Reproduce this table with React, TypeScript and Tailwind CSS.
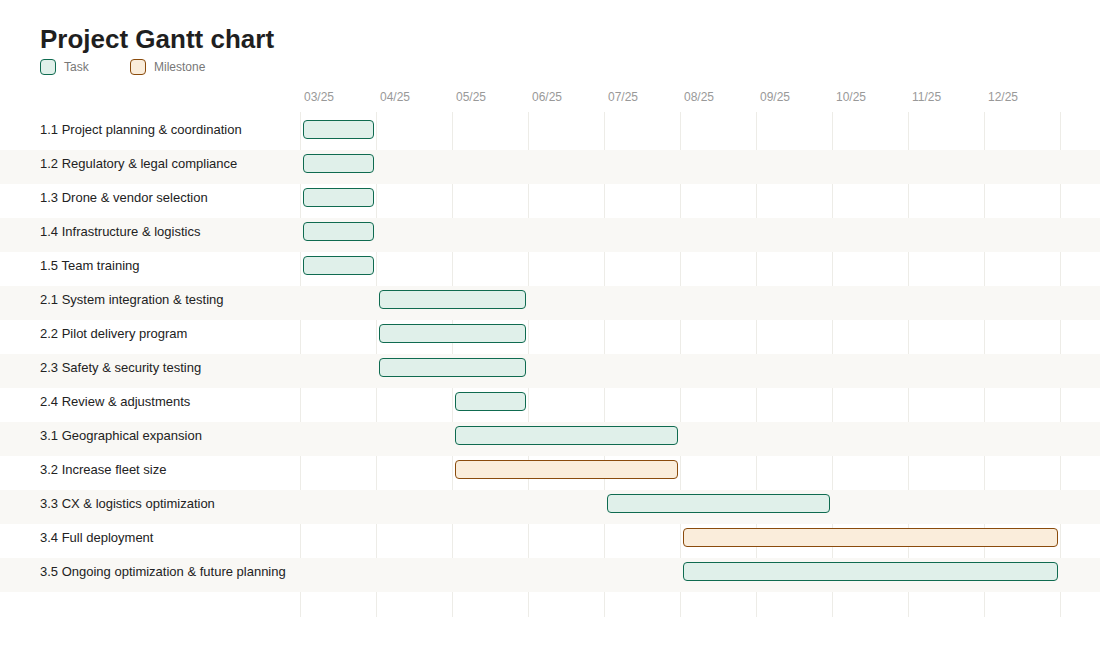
const months = ["03/25", "04/25", "05/25", "06/25", "07/25", "08/25", "09/25", "10/25", "11/25", "12/25"];

type Kind = "task" | "milestone";

const rows: Array<{ label: string; pos: string; kind: Kind }> = [
  { label: "1.1 Project planning & coordination", pos: "col-start-1 col-span-1", kind: "task" },
  { label: "1.2 Regulatory & legal compliance", pos: "col-start-1 col-span-1", kind: "task" },
  { label: "1.3 Drone & vendor selection", pos: "col-start-1 col-span-1", kind: "task" },
  { label: "1.4 Infrastructure & logistics", pos: "col-start-1 col-span-1", kind: "task" },
  { label: "1.5 Team training", pos: "col-start-1 col-span-1", kind: "task" },
  { label: "2.1 System integration & testing", pos: "col-start-2 col-span-2", kind: "task" },
  { label: "2.2 Pilot delivery program", pos: "col-start-2 col-span-2", kind: "task" },
  { label: "2.3 Safety & security testing", pos: "col-start-2 col-span-2", kind: "task" },
  { label: "2.4 Review & adjustments", pos: "col-start-3 col-span-1", kind: "task" },
  { label: "3.1 Geographical expansion", pos: "col-start-3 col-span-3", kind: "task" },
  { label: "3.2 Increase fleet size", pos: "col-start-3 col-span-3", kind: "milestone" },
  { label: "3.3 CX & logistics optimization", pos: "col-start-5 col-span-3", kind: "task" },
  { label: "3.4 Full deployment", pos: "col-start-6 col-span-5", kind: "milestone" },
  { label: "3.5 Ongoing optimization & future planning", pos: "col-start-6 col-span-5", kind: "task" },
];

const barStyle: Record<Kind, string> = {
  task: "border-[#0f6b50] bg-[#e0f0ea]",
  milestone: "border-[#8a4b0c] bg-[#faeddb]",
};

export default function App() {
  return (
    <div className="min-h-[646px] w-full bg-white font-['Liberation_Sans',Arial,sans-serif] text-[#222]">
      <div className="px-10 pt-[24px]">
        <h1 className="text-[26px] font-bold leading-[30px] text-[#1f1f1f]">Project Gantt chart</h1>
        <div className="mt-[4px] flex items-center text-[12px] text-[#777]">
          <div className="flex w-[90px] items-center gap-[8px]">
            <span className="h-[16px] w-[16px] rounded-[4px] border border-[#0f6b50] bg-[#e0f0ea]" />
            <span>Task</span>
          </div>
          <div className="flex items-center gap-[8px]">
            <span className="h-[16px] w-[16px] rounded-[4px] border border-[#8a4b0c] bg-[#faeddb]" />
            <span>Milestone</span>
          </div>
        </div>
      </div>

      <div className="mt-[12px] flex">
        <div className="w-[300px] shrink-0" />
        <div className="grid w-[760px] grid-cols-10 text-[12px] leading-[18px] text-[#999]">
          {months.map((m) => (
            <div key={m} className="pl-[4px]">
              {m}
            </div>
          ))}
        </div>
      </div>

      <div className="relative mt-[6px] pb-[25px] pt-[4px]">
        {/* vertical grid lines */}
        <div className="absolute inset-y-0 left-[300px] flex w-[761px]">
          {months.map((m) => (
            <div key={m} className="h-full w-[76px] border-l border-[#edece7]" />
          ))}
          <div className="h-full border-l border-[#edece7]" />
        </div>

        {rows.map((r, i) => (
          <div
            key={r.label}
            className={`relative flex h-[34px] items-start pt-[4px] ${i % 2 === 1 ? "bg-[#f9f8f5]" : ""}`}
          >
            <div className="w-[300px] shrink-0 pl-10 text-[13px] leading-[19px] text-[#222]">{r.label}</div>
            <div className="grid w-[760px] grid-cols-10">
              <div className={`${r.pos} ml-[3px] mr-[2px] h-[19px] rounded-[4px] border ${barStyle[r.kind]}`} />
            </div>
          </div>
        ))}
      </div>
    </div>
  );
}
